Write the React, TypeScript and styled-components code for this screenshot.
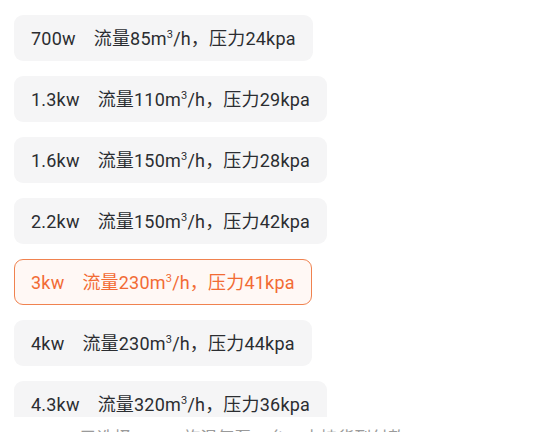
import React from "react";
import styled, { createGlobalStyle } from "styled-components";

const GlobalStyle = createGlobalStyle`
  html, body {
    margin: 0;
    padding: 0;
    background: #ffffff;
  }
  body {
    font-family: Roboto, "Noto Sans CJK SC", sans-serif;
  }
`;

const Page = styled.div`
  width: 546px;
  height: 432px;
  overflow: hidden;
  display: flex;
  flex-direction: column;
  background: #fff;
`;

const List = styled.div`
  height: 417px;
  flex-shrink: 0;
  overflow: hidden;
  box-sizing: border-box;
  padding: 15px 14px 0;
  display: flex;
  flex-direction: column;
  align-items: flex-start;
  gap: 15px;
`;

const Chip = styled.div<{ $active?: boolean }>`
  flex-shrink: 0;
  box-sizing: border-box;
  height: 46px;
  padding: 1px 16px 0;
  border-radius: 9px;
  font-size: 18px;
  line-height: 43px;
  letter-spacing: 0.2px;
  white-space: nowrap;
  color: ${(p) => (p.$active ? "#f26b34" : "#2b2d31")};
  background: ${(p) => (p.$active ? "#fff8f5" : "#f5f5f6")};
  border: 1px solid ${(p) => (p.$active ? "#f0824f" : "transparent")};
`;

const Power = styled.span`
  display: inline-block;
  margin-right: 18px;
`;

const Sup = styled.sup`
  font-size: 11px;
  line-height: 0;
  vertical-align: 0;
  position: relative;
  top: -7px;
`;

const Footer = styled.div`
  padding: 9px 0 0 80px;
  font-size: 17px;
  line-height: 24px;
  color: #9a9a9a;
  white-space: nowrap;
`;

const Hot = styled.span`
  color: #f26b34;
`;

const items = [
  { power: "700w", flow: "85", press: "24" },
  { power: "1.3kw", flow: "110", press: "29" },
  { power: "1.6kw", flow: "150", press: "28" },
  { power: "2.2kw", flow: "150", press: "42" },
  { power: "3kw", flow: "230", press: "41", active: true },
  { power: "4kw", flow: "230", press: "44" },
  { power: "4.3kw", flow: "320", press: "36" },
];

export default function App() {
  return (
    <Page>
      <GlobalStyle />
      <List>
        {items.map((it) => (
          <Chip key={it.power} $active={it.active}>
            <Power>{it.power}</Power>
            流量{it.flow}m<Sup>3</Sup>/h，压力{it.press}kpa
          </Chip>
        ))}
      </List>
      <Footer>
        已选择：3kw 旋涡气泵 <Hot>1</Hot> 台，支持货到付款
      </Footer>
    </Page>
  );
}
